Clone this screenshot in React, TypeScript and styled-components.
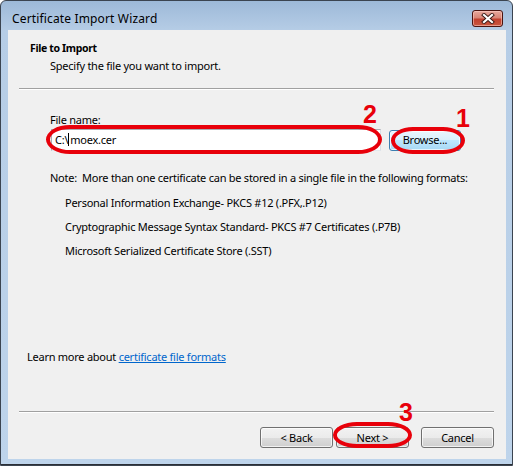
import React from "react";
import styled, { createGlobalStyle } from "styled-components";

const GlobalStyle = createGlobalStyle`
  html, body { margin: 0; padding: 0; background: #ffffff; }
  body {
    font-family: "Noto Sans", "Open Sans", sans-serif;
    font-size: 11px;
    letter-spacing: -0.25px;
    color: #000;
  }
  * { box-sizing: border-box; }
`;

const Window = styled.div`
  width: 513px;
  height: 466px;
  border: 1px solid #3b4450;
  border-radius: 6px 6px 0 0;
  background: linear-gradient(to bottom, #9db9d8 0px, #b6cde6 30px, #bed4eb 100%);
  padding: 0 6px 6px 7px;
  display: flex;
  flex-direction: column;
  box-shadow: inset 0 -1px 0 #2b2f36;
`;

const TitleBar = styled.div`
  height: 29px;
  display: flex;
  justify-content: space-between;
  align-items: flex-start;
  padding: 0 3px 0 4px;
`;

const Title = styled.span`
  font-size: 12px;
  letter-spacing: 0.15px;
  line-height: 16px;
  margin-top: 10px;
`;

const CloseButton = styled.div`
  margin-top: 9px;
  width: 31px;
  height: 17px;
  border: 1px solid #4a1410;
  border-radius: 3px;
  background: linear-gradient(to bottom, #e8a99e 0%, #d98576 45%, #c2412f 55%, #c9573f 100%);
  box-shadow: inset 0 0 0 1px rgba(255, 210, 200, 0.55);
  display: flex;
  align-items: center;
  justify-content: center;
`;

const Content = styled.div`
  flex: 1;
  background: #f0f0f0;
  display: flex;
  flex-direction: column;
`;

const Header = styled.div`
  padding: 10px 0 0 22px;
  height: 58px;
`;

const HeaderTitle = styled.div`
  font-weight: bold;
  font-size: 10.5px;
  letter-spacing: -0.35px;
  line-height: 16px;
`;

const HeaderSub = styled.div`
  line-height: 16px;
  margin-top: 2px;
  padding-left: 20px;
`;

const Separator = styled.div`
  margin: 0 12px 0 11px;
  border-top: 1px solid #a0a0a0;
  border-bottom: 1px solid #ffffff;
`;

const Body = styled.div`
  flex: 1;
  display: flex;
  flex-direction: column;
  padding: 22px 0 0 42px;
`;

const Label = styled.div`
  line-height: 16px;
`;

const InputRow = styled.div`
  position: relative;
  display: flex;
  align-items: center;
  gap: 8px;
  margin-top: 1px;
  padding-left: 1px;
`;

const TextBox = styled.div`
  width: 330px;
  height: 22px;
  background: #fff;
  border: 1px solid #abadb3;
  border-right-color: #dbdfe6;
  border-bottom-color: #e3e9ef;
  padding-left: 3px;
  line-height: 19px;
`;

const Caret = styled.span`
  display: inline-block;
  width: 1px;
  height: 13px;
  background: #000;
  vertical-align: -2px;
  margin: 0 1px 0 0;
`;

const Button = styled.div<{ $hot?: boolean; $w?: number }>`
  width: ${(p) => p.$w ?? 73}px;
  height: 21px;
  border: 1px solid ${(p) => (p.$hot ? "#3c7fb1" : "#707070")};
  border-radius: 3px;
  background: ${(p) =>
    p.$hot
      ? "linear-gradient(to bottom, #eaf6fd 0%, #d9f0fc 50%, #bee6fd 50%, #a7d9f5 100%)"
      : "linear-gradient(to bottom, #f2f2f2 0%, #ebebeb 50%, #dddddd 50%, #cfcfcf 100%)"};
  box-shadow: inset 0 0 0 1px rgba(255, 255, 255, 0.7);
  display: flex;
  align-items: center;
  justify-content: center;
  line-height: 16px;
`;

const Note = styled.div`
  line-height: 16px;
  margin-top: 19px;
`;

const FormatList = styled.div`
  display: flex;
  flex-direction: column;
  gap: 8px;
  padding-left: 15px;
  margin-top: 9px;
`;

const FormatItem = styled.div`
  line-height: 16px;
`;

const LearnMore = styled.div`
  margin: auto 0 46px -23px;
  line-height: 16px;
`;

const Link = styled.a`
  color: #0066cc;
  text-decoration: underline;
`;

const Footer = styled.div`
  display: flex;
  justify-content: flex-end;
  align-items: center;
  padding: 14px 12px 11px 0;
`;

const ButtonSlot = styled.div<{ $gap?: number }>`
  position: relative;
  margin-left: ${(p) => p.$gap ?? 0}px;
`;

const Ellipse = styled.div<{ $l: number; $t: number; $w: number; $h: number; $rx: number }>`
  position: absolute;
  left: ${(p) => p.$l}px;
  top: ${(p) => p.$t}px;
  width: ${(p) => p.$w}px;
  height: ${(p) => p.$h}px;
  border: 4px solid #e8000a;
  border-radius: ${(p) => p.$rx}px / 50%;
  pointer-events: none;
`;

const Marker = styled.div<{ $l: number; $t: number }>`
  position: absolute;
  left: ${(p) => p.$l}px;
  top: ${(p) => p.$t}px;
  font-family: "Liberation Sans", Arial, sans-serif;
  font-weight: bold;
  font-size: 25px;
  letter-spacing: 0;
  line-height: 25px;
  color: #e8000a;
`;

export default function App() {
  return (
    <>
      <GlobalStyle />
      <Window>
        <TitleBar>
          <Title>Certificate Import Wizard</Title>
          <CloseButton>
            <svg width="14" height="11" viewBox="0 0 14 11">
              <path d="M3 2 L11 9 M11 2 L3 9" stroke="#3a1a16" strokeWidth="4" strokeLinecap="square" />
              <path d="M3 2 L11 9 M11 2 L3 9" stroke="#ffffff" strokeWidth="2.2" strokeLinecap="square" />
            </svg>
          </CloseButton>
        </TitleBar>
        <Content>
          <Header>
            <HeaderTitle>File to Import</HeaderTitle>
            <HeaderSub>Specify the file you want to import.</HeaderSub>
          </Header>
          <Separator />
          <Body>
            <Label>File name:</Label>
            <InputRow>
              <TextBox>
                C:\<Caret />moex.cer
              </TextBox>
              <Button $hot $w={72}>Browse...</Button>
              <Ellipse $l={-4} $t={-4} $w={336} $h={29} $rx={24} />
              <Ellipse $l={341} $t={-2} $w={74} $h={27} $rx={22} />
              <Marker $l={313} $t={-27}>2</Marker>
              <Marker $l={406} $t={-23}>1</Marker>
            </InputRow>
            <Note>Note:&nbsp; More than one certificate can be stored in a single file in the following formats:</Note>
            <FormatList>
              <FormatItem>Personal Information Exchange- PKCS #12 (.PFX,.P12)</FormatItem>
              <FormatItem>Cryptographic Message Syntax Standard- PKCS #7 Certificates (.P7B)</FormatItem>
              <FormatItem>Microsoft Serialized Certificate Store (.SST)</FormatItem>
            </FormatList>
            <LearnMore>
              Learn more about <Link>certificate file formats</Link>
            </LearnMore>
          </Body>
          <Separator />
          <Footer>
            <ButtonSlot>
              <Button>&lt; Back</Button>
            </ButtonSlot>
            <ButtonSlot $gap={3}>
              <Button>Next &gt;</Button>
              <Ellipse $l={-3} $t={-5} $w={79} $h={26} $rx={24} />
              <Marker $l={63} $t={-27}>3</Marker>
            </ButtonSlot>
            <ButtonSlot $gap={12}>
              <Button>Cancel</Button>
            </ButtonSlot>
          </Footer>
        </Content>
      </Window>
    </>
  );
}
